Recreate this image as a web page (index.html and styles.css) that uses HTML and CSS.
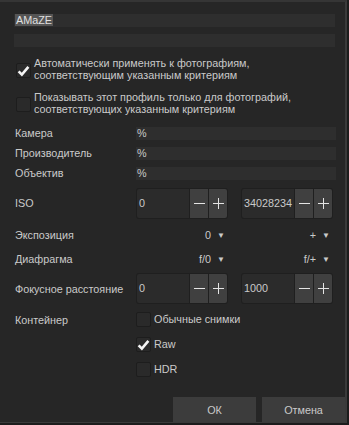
FILE: index.html
```html
<!DOCTYPE html>
<html>
<head>
    <title>Профиль обработки</title>
    <link rel="stylesheet" href="styles.css">
</head>
<body>
    <div class="dialog">
        <div class="entry name-entry"><span class="selected">AMaZE</span></div>
        <div class="entry name-entry second"></div>

        <label class="check-row first">
            <span class="checkbox checked">
                <svg viewBox="0 0 16 16"><path d="M2 8.5 L6 12.5 L14 3" /></svg>
            </span>
            <span class="check-text">Автоматически применять к фотографиям,<br>соответствующим указанным критериям</span>
        </label>
        <label class="check-row">
            <span class="checkbox"></span>
            <span class="check-text">Показывать этот профиль только для фотографий,<br>соответствующих указанным критериям</span>
        </label>

        <div class="criteria">
            <div class="label">Камера</div>
            <div class="entry">%</div>

            <div class="label">Производитель</div>
            <div class="entry">%</div>

            <div class="label">Объектив</div>
            <div class="entry">%</div>

            <div class="label">ISO</div>
            <div class="pair spin-row">
                <div class="spin"><span class="value">0</span><span class="btn minus"></span><span class="btn plus"></span></div>
                <div class="spin"><span class="value">34028234</span><span class="btn minus"></span><span class="btn plus"></span></div>
            </div>

            <div class="label">Экспозиция</div>
            <div class="pair">
                <div class="combo">0<span class="arrow">&#9660;</span></div>
                <div class="combo">+<span class="arrow">&#9660;</span></div>
            </div>

            <div class="label">Диафрагма</div>
            <div class="pair">
                <div class="combo">f/0<span class="arrow">&#9660;</span></div>
                <div class="combo">f/+<span class="arrow">&#9660;</span></div>
            </div>

            <div class="label focal">Фокусное расстояние</div>
            <div class="pair spin-row focal">
                <div class="spin"><span class="value">0</span><span class="btn minus"></span><span class="btn plus"></span></div>
                <div class="spin"><span class="value">1000</span><span class="btn minus"></span><span class="btn plus"></span></div>
            </div>

            <div class="label container-label">Контейнер</div>
            <div class="formats">
                <label class="small-check"><span class="checkbox"></span>Обычные снимки</label>
                <label class="small-check"><span class="checkbox checked"><svg viewBox="0 0 16 16"><path d="M2 8.5 L6 12.5 L14 3" /></svg></span>Raw</label>
                <label class="small-check"><span class="checkbox"></span>HDR</label>
            </div>
        </div>

        <div class="actions">
            <button class="action">ОК</button>
            <button class="action">Отмена</button>
        </div>
    </div>
</body>
</html>
```

FILE: styles.css
```css
body {
    margin: 0;
    background: #1c1c1c;
    font-family: "Liberation Sans", Arial, sans-serif;
    font-size: 10.8px;
    color: #cacaca;
}
.dialog {
    box-sizing: border-box;
    width: 347px;
    height: 423px;
    background: #262626;
    border-top: 2px solid #353535;
    border-right: 2px solid #3a3a3a;
    border-bottom: 1px solid #3a3a3a;
    padding: 12px 12px 0 14px;
    display: flex;
    flex-direction: column;
}
.entry {
    height: 13px;
    line-height: 13px;
    background: #2e2e2e;
    padding-left: 1px;
    white-space: nowrap;
}
.name-entry {
    width: 320px;
}
.name-entry.second {
    margin-top: 7px;
}
.selected {
    background: #555555;
    color: #e0e0e0;
    padding: 0 1px;
}
.check-row {
    display: flex;
    align-items: center;
    gap: 3px;
    margin-left: 2px;
    line-height: 12px;
}
.check-row.first {
    margin-top: 10px;
}
.check-row + .check-row {
    margin-top: 10px;
}
.checkbox {
    box-sizing: border-box;
    width: 15px;
    height: 15px;
    flex: none;
    background: #2a2a2a;
    border: 1px solid #1d1d1d;
    border-radius: 2px;
    display: flex;
    align-items: center;
    justify-content: center;
}
.checkbox svg {
    width: 16px;
    height: 16px;
    fill: none;
    stroke: #f4f4f4;
    stroke-width: 3.2;
}
.check-row .checkbox {
    margin-top: 3px;
}
.criteria {
    display: grid;
    grid-template-columns: 121px 200px;
    align-items: center;
    row-gap: 7px;
    margin-top: 12px;
    margin-left: 1px;
}
.label {
    line-height: 13px;
}
.pair {
    display: grid;
    grid-template-columns: 92px 92px;
    column-gap: 13px;
}
.spin-row {
    margin: 1px 0;
}
.focal {
    margin-top: -2px;
}
.spin {
    display: flex;
    height: 31px;
    background: #1f1f1f;
    border-radius: 3px;
    box-sizing: border-box;
    padding: 1px;
    gap: 1px;
}
.spin .value {
    flex: 1;
    background: #2b2b2b;
    line-height: 29px;
    padding-left: 2px;
    border-radius: 2px 0 0 2px;
}
.spin .btn {
    position: relative;
    width: 18px;
    background: #404040;
}
.spin .btn:last-child {
    border-radius: 0 2px 2px 0;
}
.spin .btn::before,
.spin .plus::after {
    content: "";
    position: absolute;
    left: 4px;
    top: 14px;
    width: 11px;
    height: 1px;
    background: #e4e4e4;
}
.spin .plus::after {
    left: 9px;
    top: 9px;
    width: 1px;
    height: 11px;
}
.combo {
    text-align: right;
    padding-right: 3px;
    line-height: 16px;
}
.arrow {
    font-size: 8px;
    margin-left: 6px;
    vertical-align: 1px;
}
.container-label {
    align-self: start;
    margin-top: 2px;
}
.formats {
    display: flex;
    flex-direction: column;
    gap: 10px;
    margin-top: 0;
}
.small-check {
    display: flex;
    align-items: center;
    gap: 3px;
    line-height: 15px;
}
.actions {
    margin-top: auto;
    display: flex;
    justify-content: flex-end;
    gap: 6px;
    margin-right: -12px;
}
.action {
    width: 83px;
    height: 25px;
    background: #3c3c3c;
    border: none;
    color: #cacaca;
    font-family: "Liberation Sans", Arial, sans-serif;
    font-size: 10.8px;
    padding: 0;
}
```
